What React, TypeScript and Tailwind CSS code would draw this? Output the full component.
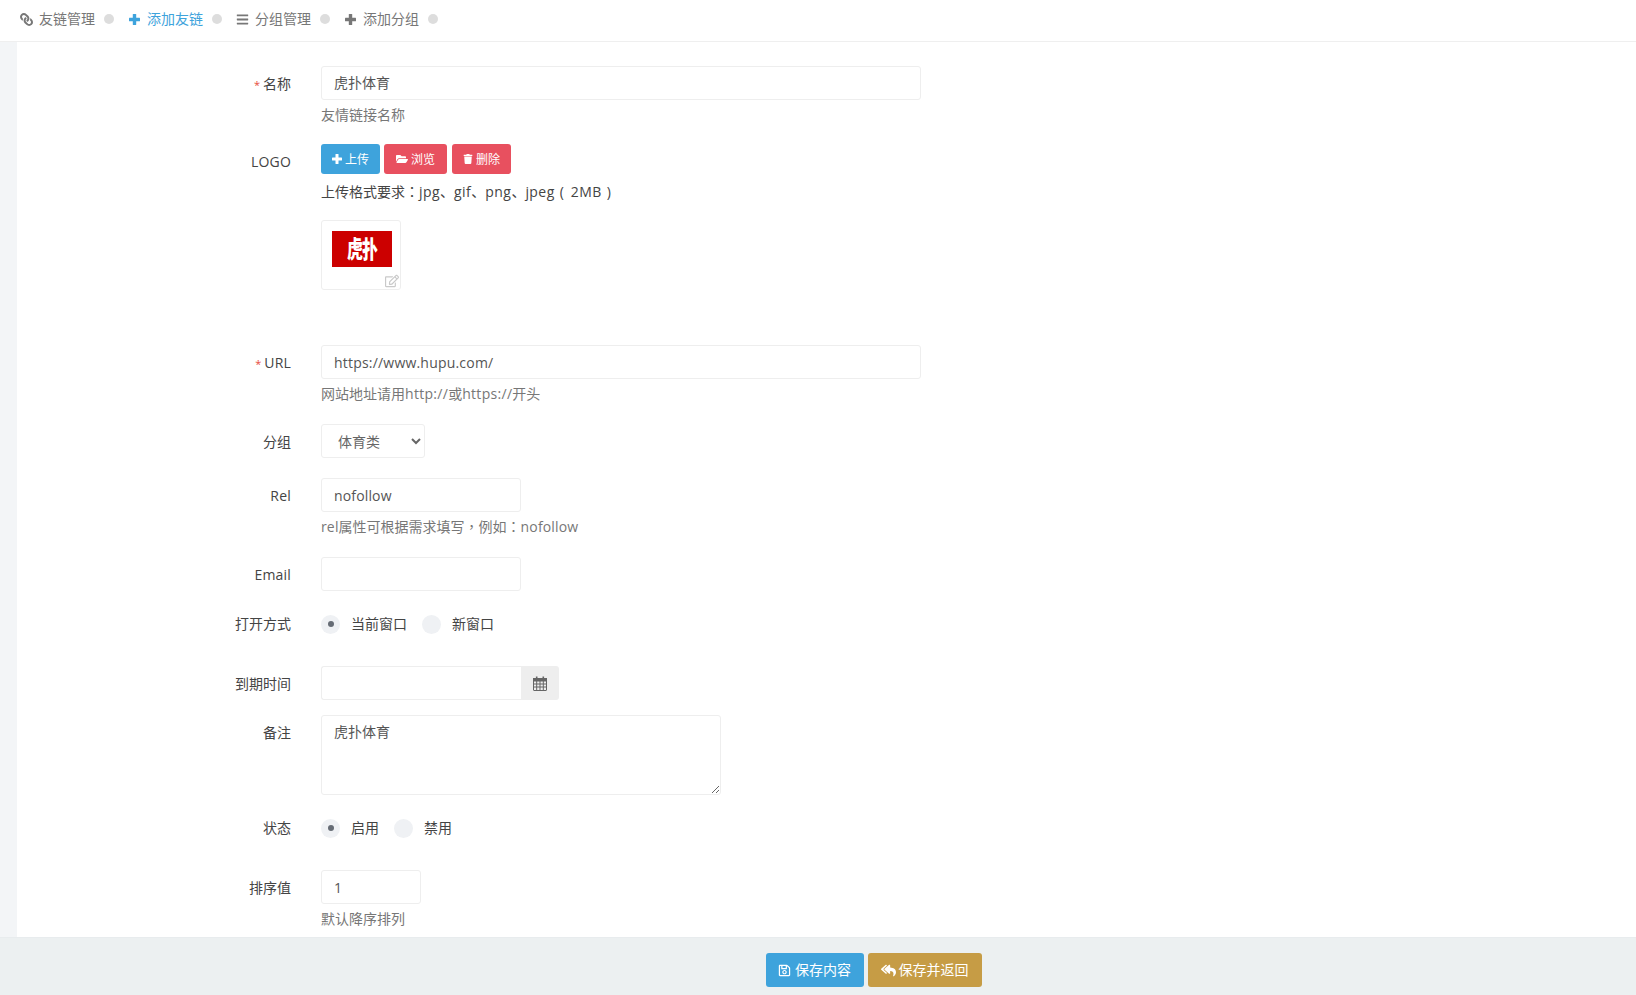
import React from "react";
import { FaLink, FaBars, FaFolderOpen, FaTrash, FaRegEdit, FaRegSave, FaReplyAll } from "react-icons/fa";

const fontCls = "font-['Open_Sans','Noto_Sans_CJK_SC',sans-serif]";
const tcCls = "font-['Noto_Sans_CJK_TC',sans-serif] leading-none";

function PlusIcon({ size, bar }: { size: number; bar: number }) {
  const a = (size - bar) / 2;
  return (
    <svg width={size} height={size} viewBox={`0 0 ${size} ${size}`} fill="currentColor">
      <rect x={0} y={a} width={size} height={bar} rx={0.5} />
      <rect x={a} y={0} width={bar} height={size} rx={0.5} />
    </svg>
  );
}

function CalendarIcon() {
  return (
    <svg width="14" height="15" viewBox="0 0 14 15" fill="none" stroke="currentColor" strokeWidth="1">
      <rect x="0.5" y="2.5" width="13" height="12" rx="0.5" />
      <rect x="0.5" y="2.5" width="13" height="2.5" fill="currentColor" />
      <path d="M0.5 8H13.5M0.5 11H13.5M3.7 5V14.5M7 5V14.5M10.3 5V14.5" />
      <path d="M3.7 0.5V3.5M10.3 0.5V3.5" strokeWidth="1.6" />
    </svg>
  );
}

function NavItem({ icon, label, active }: { icon: React.ReactNode; label: string; active?: boolean }) {
  return (
    <div className={`flex items-center w-[108px] shrink-0 ${active ? "text-[#3ea3dc]" : "text-[#777]"}`}>
      <span className={`w-[13px] flex justify-center ${active ? "text-[#3ea3dc]" : "text-[#777]"}`}>{icon}</span>
      <span className="ml-[6px] w-[56px] text-[14px] leading-[20px]">{label}</span>
      <span className="ml-[9px] w-[10px] h-[10px] rounded-full bg-[#dddddd]" />
    </div>
  );
}

function Row({ label, req, mt, latin, children }: { label: string; req?: boolean; mt: string; latin?: boolean; children: React.ReactNode }) {
  return (
    <div className={`flex ${mt}`}>
      <div className="w-[274px] shrink-0 pt-[8px] text-right text-[14px] leading-[20px] text-[#444]">
        {req && <span className="text-[#e74c3c] text-[11px] leading-none mr-[3px]">*</span>}
        <span className={latin ? "tracking-[0.2px]" : ""}>{label}</span>
      </div>
      <div className="ml-[30px] flex-1 min-w-0">{children}</div>
    </div>
  );
}

function Help({ children }: { children: React.ReactNode }) {
  return <div className="mt-[5px] h-[20px] text-[14px] leading-[20px] text-[#777]">{children}</div>;
}

const inputCls =
  "block h-[34px] rounded-[3px] border border-[#eeeeee] bg-white px-[12px] text-[14px] text-[#555] outline-none";

function Radio({ label, on, width }: { label: string; on?: boolean; width: string }) {
  return (
    <div className={`flex items-center ${width}`}>
      <span className="w-[19px] h-[19px] rounded-full bg-[#eff1f4] flex items-center justify-center">
        {on && <span className="w-[6px] h-[6px] rounded-full bg-[#666c75]" />}
      </span>
      <span className="ml-[11px] text-[14px] leading-[20px] text-[#444]">{label}</span>
    </div>
  );
}

function SmallBtn({ icon, label, color, width }: { icon: React.ReactNode; label: string; color: string; width: string }) {
  return (
    <button className={`flex items-center justify-center gap-[3px] h-[30px] rounded-[3px] text-white text-[12px] ${color} ${width}`}>
      {icon}
      <span className="pt-[1px]">{label}</span>
    </button>
  );
}

export default function App() {
  return (
    <div className={`flex flex-col h-screen overflow-hidden bg-white ${fontCls}`}>
      <div className="h-[42px] shrink-0 border-b border-[#efefef] flex items-center pl-[20px] pb-[3px]">
        <NavItem icon={<FaLink size={13} className="-scale-x-100" />} label="友链管理" />
        <NavItem icon={<PlusIcon size={11} bar={3.4} />} label="添加友链" active />
        <NavItem icon={<FaBars size={13} />} label="分组管理" />
        <NavItem icon={<PlusIcon size={11} bar={3.4} />} label="添加分组" />
      </div>

      <div className="flex flex-1 min-h-0 overflow-hidden">
        <div className="w-[17px] shrink-0 bg-[#f3f5f7]" />
        <div className="flex-1 pt-[24px]">
          <Row label="名称" req mt="mt-0">
            <input className={`${inputCls} w-[600px] pb-[2px]`} defaultValue="虎扑体育" />
            <Help>友情链接名称</Help>
          </Row>

          <Row label="LOGO" latin mt="mt-[19px]">
            <div className="flex">
              <SmallBtn icon={<PlusIcon size={10} bar={3} />} label="上传" color="bg-[#3ea3dc]" width="w-[59px]" />
              <SmallBtn icon={<FaFolderOpen size={12} />} label="浏览" color="bg-[#e8505f] ml-[4px]" width="w-[63px]" />
              <SmallBtn icon={<FaTrash size={10} />} label="删除" color="bg-[#e8505f] ml-[5px]" width="w-[59px]" />
            </div>
            <div className="mt-[8px] h-[20px] text-[14px] leading-[20px] text-[#444]">
              上传格式要求<span className={tcCls}>：</span>
              <span className="tracking-[0.45px]">jpg</span>、<span className="tracking-[0.45px]">gif</span>、<span className="tracking-[0.45px]">png</span>、<span className="tracking-[0.45px]">jpeg</span>
              <span className="inline-block w-[14px] text-center">(</span>
              <span className="ml-[2px] tracking-[0.45px]">2MB</span>
              <span className="inline-block w-[14px] text-center">)</span>
            </div>
            <div className="relative mt-[18px] w-[80px] h-[70px] rounded-[3px] border border-[#eeeeee] pt-[10px] pl-[10px]">
              <div className="w-[60px] h-[36px] bg-[#cc0000] flex items-center justify-center overflow-hidden">
                <span className="text-white text-[16px] leading-none font-black tracking-[-1px] scale-y-[1.5]">虎扑</span>
              </div>
              <FaRegEdit size={14} className="absolute right-[1px] bottom-[1px] text-[#c9c9c9]" />
            </div>
          </Row>

          <Row label="URL" latin req mt="mt-[55px]">
            <input className={`${inputCls} w-[600px] tracking-[0.2px]`} defaultValue="https://www.hupu.com/" />
            <Help>
              网站地址请用<span className="tracking-[0.3px]">http://</span>或<span className="tracking-[0.3px]">https://</span>开头
            </Help>
          </Row>

          <Row label="分组" mt="mt-[20px]">
            <select className="block h-[34px] w-[104px] rounded-[3px] border border-[#eeeeee] bg-white pl-[12px] text-[14px] text-[#666] outline-none" defaultValue="体育类">
              <option>体育类</option>
            </select>
          </Row>

          <Row label="Rel" latin mt="mt-[20px]">
            <input className={`${inputCls} w-[200px] tracking-[0.15px]`} defaultValue="nofollow" />
            <Help>
              <span className="tracking-[0.15px]">rel</span>属性可根据需求填写<span className={tcCls}>，</span>例如<span className={tcCls}>：</span>
              <span className="tracking-[0.15px]">nofollow</span>
            </Help>
          </Row>

          <Row label="Email" latin mt="mt-[20px]">
            <input className={`${inputCls} w-[200px]`} />
          </Row>

          <Row label="打开方式" mt="mt-[15px]">
            <div className="flex items-center h-[36px]">
              <Radio label="当前窗口" on width="w-[101px]" />
              <Radio label="新窗口" width="w-[80px]" />
            </div>
          </Row>

          <Row label="到期时间" mt="mt-[24px]">
            <div className="flex w-[238px] h-[34px]">
              <input className={`${inputCls} w-[200px] rounded-r-none border-r-0`} />
              <div className="w-[38px] rounded-r-[3px] bg-[#eeeeee] flex items-center justify-center text-[#666]">
                <CalendarIcon />
              </div>
            </div>
          </Row>

          <Row label="备注" mt="mt-[15px]">
            <textarea className="block w-[400px] h-[80px] rounded-[3px] border border-[#eeeeee] bg-white px-[12px] py-[6px] text-[14px] leading-[20px] text-[#555] outline-none" defaultValue="虎扑体育" />
          </Row>

          <Row label="状态" mt="mt-[15px]">
            <div className="flex items-center h-[36px]">
              <Radio label="启用" on width="w-[73px]" />
              <Radio label="禁用" width="w-[60px]" />
            </div>
          </Row>

          <Row label="排序值" mt="mt-[24px]">
            <input className={`${inputCls} w-[100px]`} defaultValue="1" />
            <Help>默认降序排列</Help>
          </Row>
        </div>
      </div>

      <div className="h-[58px] shrink-0 bg-[#ecf0f1] border-t border-[#e8ecee] flex items-start justify-center pt-[15px] pl-[111px]">
        <button className="flex items-center justify-center gap-[4px] w-[98px] h-[34px] rounded-[3px] bg-[#3ea3dc] text-white text-[14px]">
          <FaRegSave size={13} />
          <span className="pb-[2px]">保存内容</span>
        </button>
        <button className="ml-[4px] flex items-center justify-center gap-[3px] w-[114px] h-[34px] rounded-[3px] bg-[#c69c45] text-white text-[14px]">
          <FaReplyAll size={15} />
          <span className="pb-[2px]">保存并返回</span>
        </button>
      </div>
    </div>
  );
}
